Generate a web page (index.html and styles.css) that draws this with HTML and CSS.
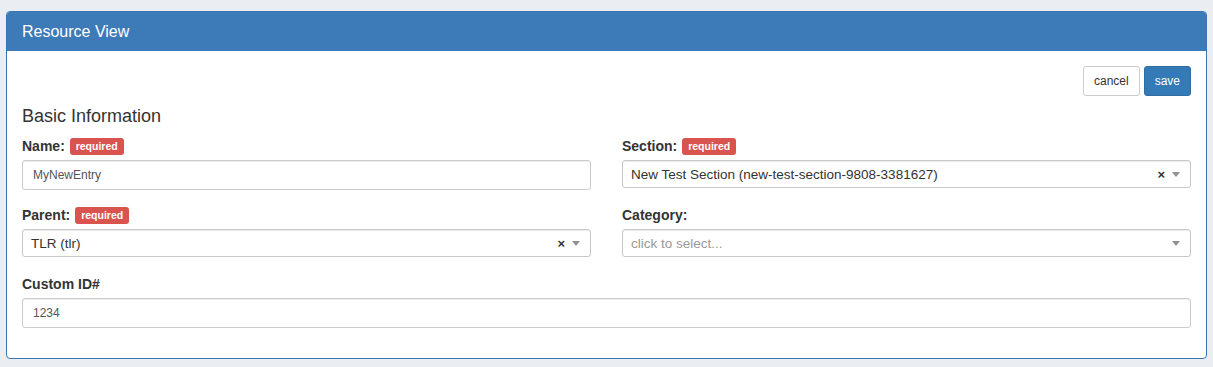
FILE: index.html
```html
<!DOCTYPE html>
<html lang="en">
<head>
    <meta charset="UTF-8">
    <title>Resource View</title>
    <link rel="stylesheet" href="styles.css">
</head>
<body>
    <!-- Resource panel -->
    <div class="panel">
        <div class="panel-heading">Resource View</div>
        <div class="panel-body">
            <div class="toolbar">
                <button class="btn btn-default">cancel</button>
                <button class="btn btn-primary">save</button>
            </div>

            <h4 class="section-title">Basic Information</h4>

            <div class="form-grid">
                <div class="form-group">
                    <label>Name: <span class="badge">required</span></label>
                    <input type="text" class="form-control" value="MyNewEntry">
                </div>
                <div class="form-group">
                    <label>Section: <span class="badge">required</span></label>
                    <div class="select">
                        <span class="select-value">New Test Section (new-test-section-9808-3381627)</span>
                        <span class="select-clear">&times;</span>
                        <span class="select-caret"></span>
                    </div>
                </div>
                <div class="form-group">
                    <label>Parent: <span class="badge">required</span></label>
                    <div class="select">
                        <span class="select-value">TLR (tlr)</span>
                        <span class="select-clear">&times;</span>
                        <span class="select-caret"></span>
                    </div>
                </div>
                <div class="form-group">
                    <label>Category:</label>
                    <div class="select">
                        <span class="select-value placeholder">click to select...</span>
                        <span class="select-caret"></span>
                    </div>
                </div>
                <div class="form-group full">
                    <label>Custom ID#</label>
                    <input type="text" class="form-control" value="1234">
                </div>
            </div>
        </div>
    </div>
</body>
</html>
```

FILE: styles.css
```css
/* Global */
body {
    margin: 0;
    padding: 11px 6px 0 6px;
    background: #eaedf1;
    font-family: 'Liberation Sans', Arial, sans-serif;
    font-size: 14px;
    color: #333;
}

/* Panel */
.panel {
    background: #fff;
    border: 1px solid #3a76b2;
    border-radius: 4px;
}

.panel-heading {
    background: #3d7ab8;
    color: #fff;
    font-size: 16px;
    line-height: 19px;
    padding: 10px 15px;
    border-radius: 3px 3px 0 0;
}

.panel-body {
    padding: 15px;
}

/* Buttons */
.toolbar {
    display: flex;
    justify-content: flex-end;
    gap: 4px;
}

.btn {
    font-family: inherit;
    font-size: 12px;
    line-height: 18px;
    padding: 5px 10px;
    border: 1px solid #ccc;
    border-radius: 3px;
    cursor: pointer;
}

.btn-default {
    background: #fff;
    color: #333;
}

.btn-primary {
    background: #337ab7;
    border-color: #2e6da4;
    color: #fff;
}

.section-title {
    font-size: 18px;
    font-weight: normal;
    line-height: 20px;
    margin: 10px 0 10px;
}

/* Form */
.form-grid {
    display: grid;
    grid-template-columns: 1fr 1fr;
    column-gap: 31px;
}

.form-group {
    margin-bottom: 15px;
}

.form-group.full {
    grid-column: 1 / 3;
}

.form-group label {
    display: block;
    font-weight: bold;
    line-height: 20px;
    margin-bottom: 4px;
}

.badge {
    display: inline-block;
    background: #d9534f;
    color: #fff;
    font-size: 10.5px;
    font-weight: bold;
    line-height: 1;
    padding: 3px 6px 3px;
    border-radius: 3px;
    vertical-align: 1px;
    margin-left: 1px;
}

.form-control {
    display: block;
    box-sizing: border-box;
    width: 100%;
    height: 30px;
    padding: 5px 10px;
    font-family: inherit;
    font-size: 12px;
    color: #555;
    border: 1px solid #ccc;
    border-radius: 3px;
    box-shadow: inset 0 1px 1px rgba(0, 0, 0, 0.075);
}

/* Select box */
.select {
    display: flex;
    align-items: center;
    box-sizing: border-box;
    height: 28px;
    margin-top: 1px;
    margin-bottom: 2px;
    padding: 0 8px;
    border: 1px solid #c8c8c8;
    border-radius: 3px;
    box-shadow: inset 0 1px 1px rgba(0, 0, 0, 0.08);
}

.select-value {
    flex: 1;
    font-size: 13.5px;
    color: #333;
}

.select-value.placeholder {
    color: #999;
}

.select-clear {
    font-size: 13px;
    font-weight: bold;
    color: #333;
    margin-right: 7px;
    margin-top: 1px;
}

.select-caret {
    width: 0;
    height: 0;
    border-left: 4px solid transparent;
    border-right: 4px solid transparent;
    border-top: 5px solid #909090;
    margin-right: 2px;
}
```
